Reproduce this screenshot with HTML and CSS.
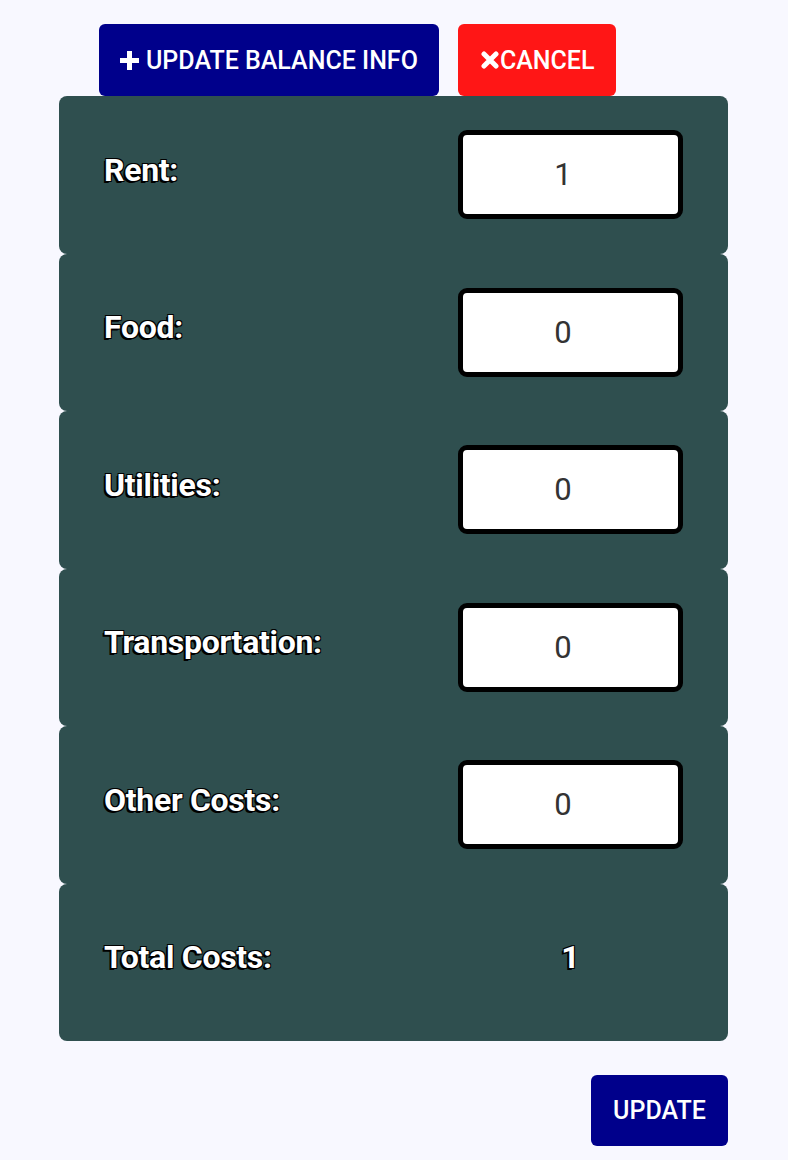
FILE: index.html
```html
<!DOCTYPE html>
<html>
<head>
<meta charset="utf-8">
<link rel="stylesheet" href="styles.css">
</head>
<body>
<div class="page">
  <div class="actions">
    <button class="btn btn-blue"><svg class="ico" width="19" height="19" viewBox="0 0 19 19"><path d="M7 0h5v7h7v5h-7v7h-5v-7h-7v-5h7z" fill="#fff"/></svg>UPDATE BALANCE INFO</button>
    <button class="btn btn-red btn-cancel"><svg class="ico-x" width="18" height="18" viewBox="0 0 18 18"><path d="M3 3L15 15M15 3L3 15" stroke="#fff" stroke-width="5" stroke-linecap="round"/></svg>CANCEL</button>
  </div>
  <div class="card"><span class="label">Rent:</span><input class="field" type="number" value="1"></div>
  <div class="card"><span class="label">Food:</span><input class="field" type="number" value="0"></div>
  <div class="card"><span class="label">Utilities:</span><input class="field" type="number" value="0"></div>
  <div class="card"><span class="label">Transportation:</span><input class="field" type="number" value="0"></div>
  <div class="card"><span class="label">Other Costs:</span><input class="field" type="number" value="0"></div>
  <div class="card"><span class="label">Total Costs:</span><span class="total">1</span></div>
  <div class="footer"><button class="btn btn-blue btn-update">UPDATE</button></div>
</div>
</body>
</html>
```
FILE: styles.css
```css
html, body {
  margin: 0;
  padding: 0;
  background: #f8f8ff;
  font-family: Roboto, "Liberation Sans", sans-serif;
}
.page {
  width: 669px;
  margin: 0 0 0 59px;
  padding-top: 24px;
}
.actions {
  display: flex;
  gap: 19px;
  margin-left: 40px;
}
.btn {
  height: 72px;
  border: none;
  border-radius: 6px;
  color: #fff;
  font-family: Roboto, "Liberation Sans", sans-serif;
  font-size: 25px;
  font-weight: 500;
  padding: 0 21px;
  display: flex;
  align-items: center;
  cursor: pointer;
}
.btn-blue { background: #00008b; }
.btn-red { background: #ff1616; }
.btn-cancel { padding: 0 22px 0 23px; }
.ico { margin-right: 7px; }
.ico-x { margin-right: 1px; }
.card {
  height: 157.5px;
  box-sizing: border-box;
  background: #2f4f4f;
  border-radius: 8px;
  padding: 0 45px;
  display: flex;
  align-items: center;
  justify-content: space-between;
}
.label {
  color: #fff;
  font-size: 32px;
  font-weight: 700;
  letter-spacing: -0.3px;
  margin-bottom: 10px;
  text-shadow: -1px 1px 0 #000, 1px 1px 0 #000, -1px -1px 0 #000, 1px -1px 0 #000, -2px 2px 0 #000;
}
.field {
  width: 225px;
  height: 89px;
  box-sizing: border-box;
  border: 5px solid #000;
  border-radius: 9px;
  background: #fff;
  text-align: center;
  font-family: Roboto, "Liberation Sans", sans-serif;
  font-size: 31px;
  font-weight: 400;
  color: #333;
  outline: none;
}
.total {
  width: 225px;
  text-align: center;
  color: #fff;
  font-size: 32px;
  font-weight: 700;
  margin-bottom: 10px;
  text-shadow: -1px 1px 0 #000, 1px 1px 0 #000, -1px -1px 0 #000, 1px -1px 0 #000, -2px 2px 0 #000;
}
.footer {
  display: flex;
  justify-content: flex-end;
  margin-top: 34px;
}
.btn-update {
  height: 71px;
  width: 137px;
  justify-content: center;
  padding: 0;
}
```
